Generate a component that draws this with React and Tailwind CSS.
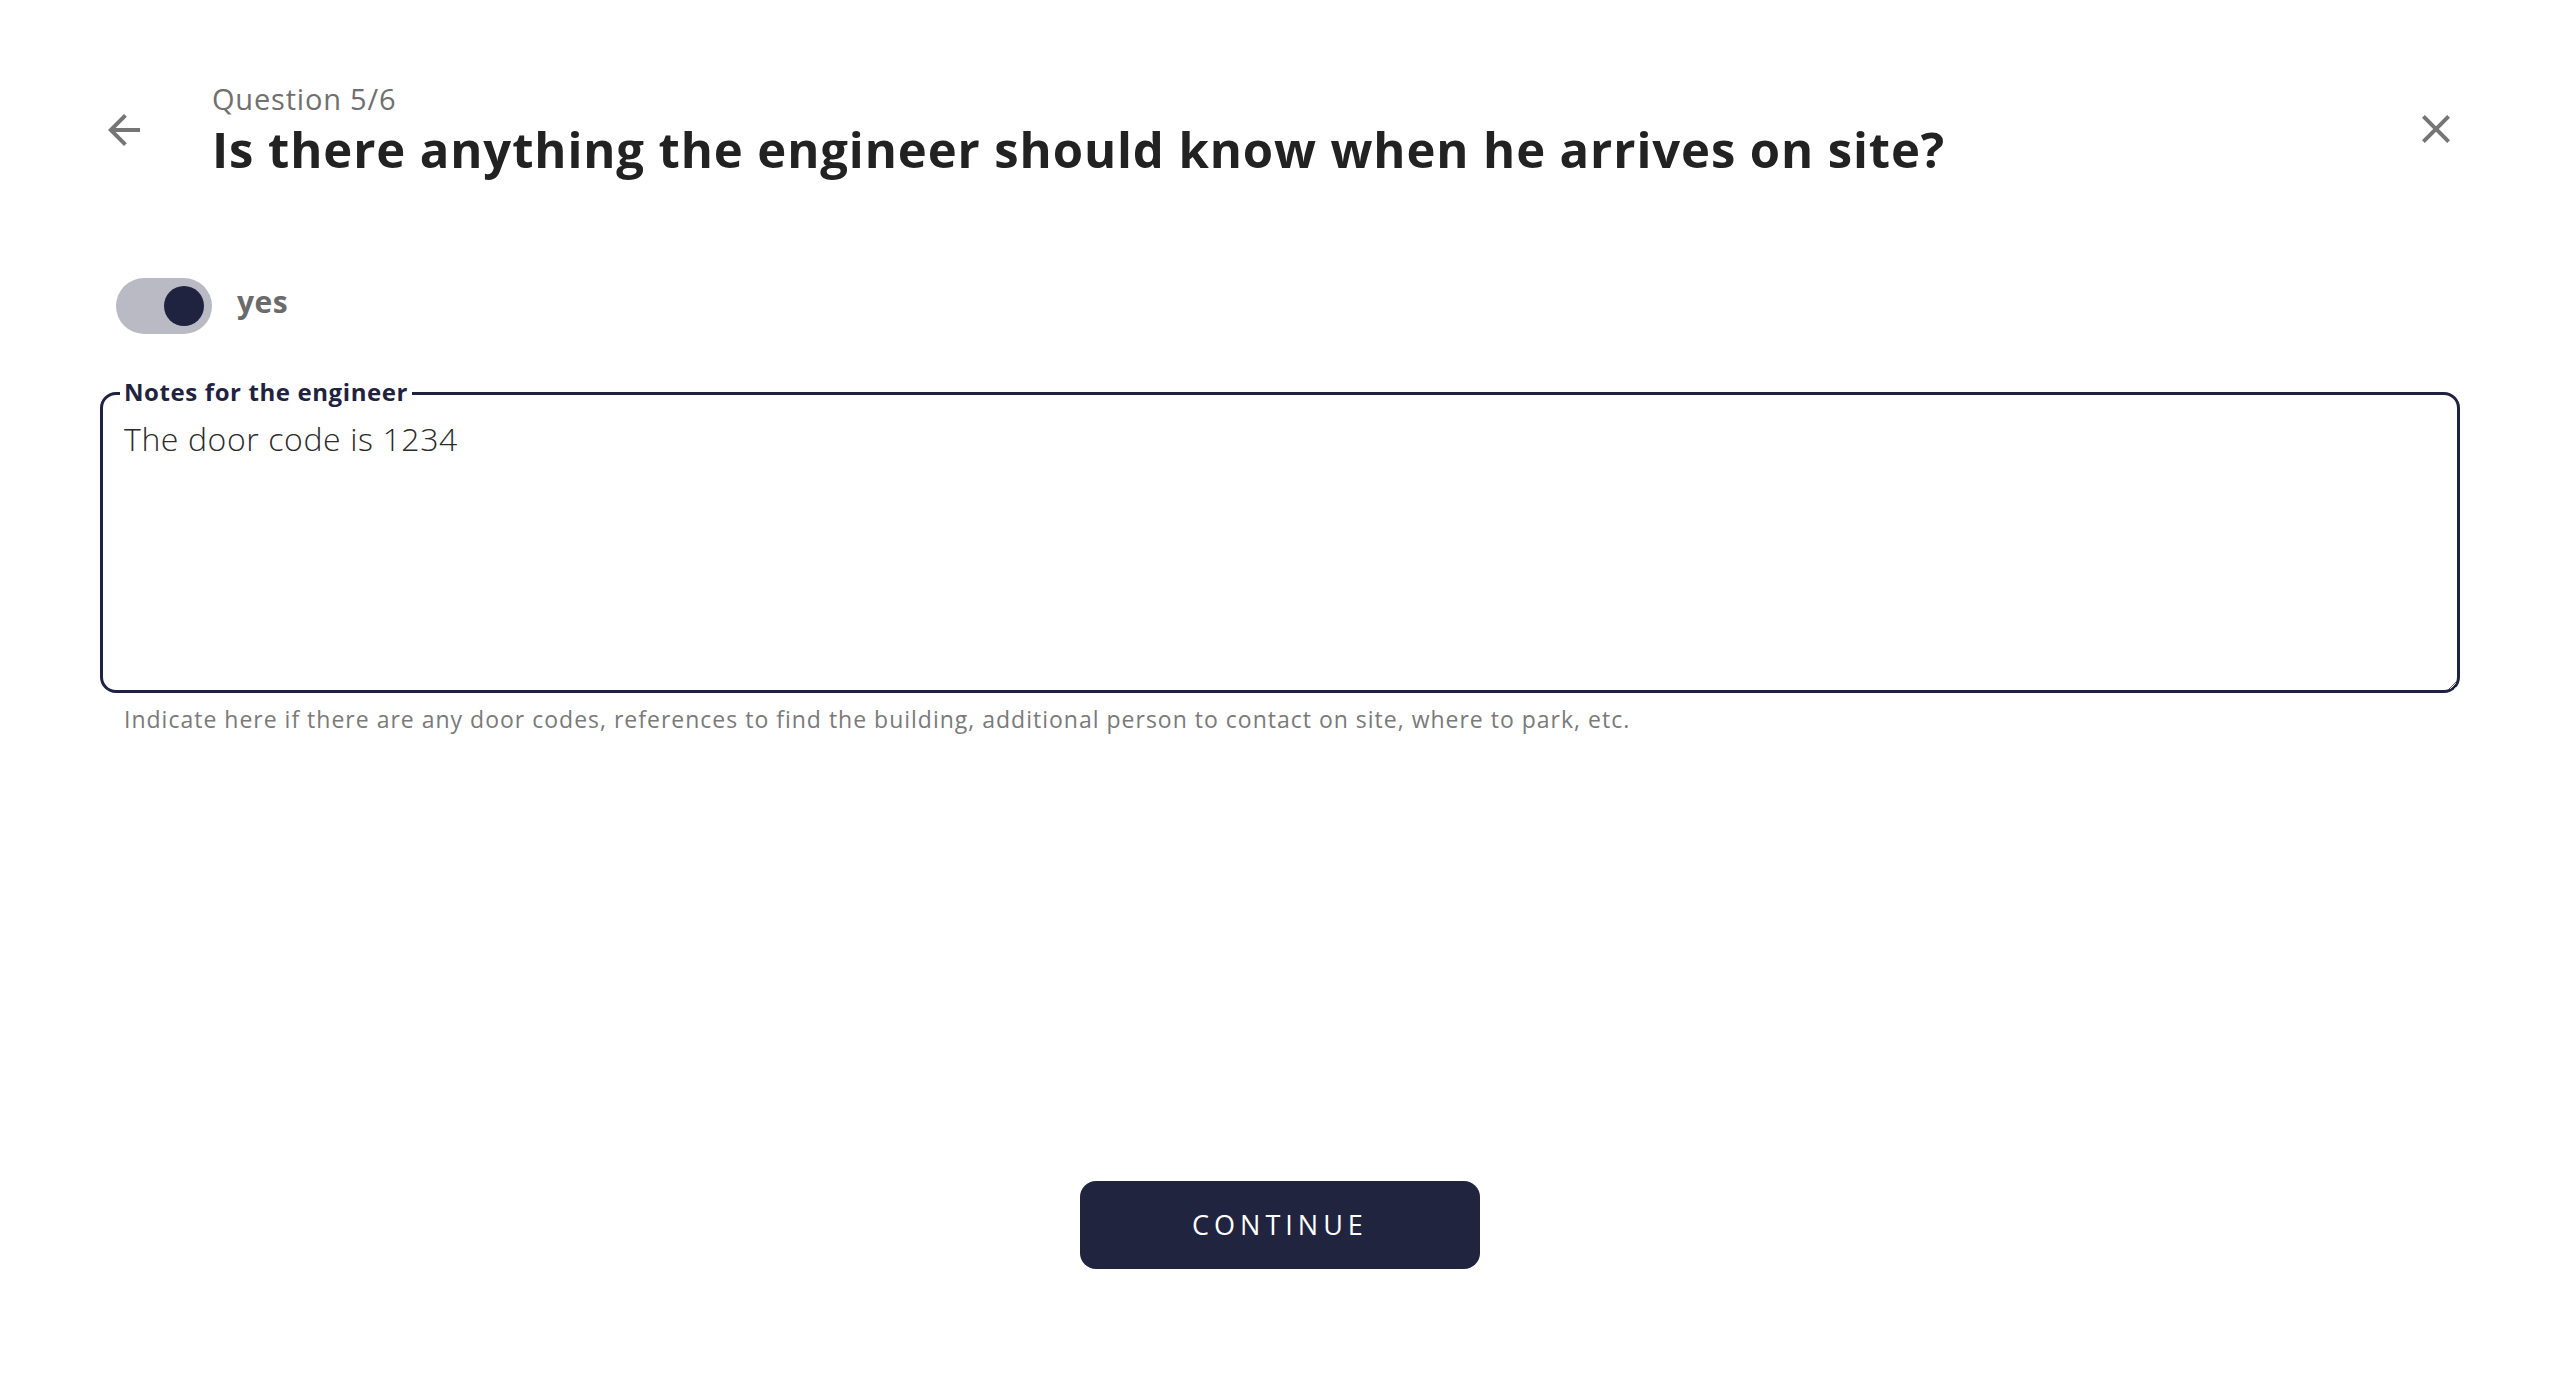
import React, { useState } from "react";

const ArrowBackIcon = ({ className }) => (
  <svg viewBox="0 0 24 24" className={className} fill="currentColor">
    <path d="M20 11H7.83l5.59-5.59L12 4l-8 8 8 8 1.41-1.41L7.83 13H20v-2z" />
  </svg>
);

const CloseIcon = ({ className }) => (
  <svg viewBox="0 0 24 24" className={className} fill="currentColor">
    <path d="M19 6.41 17.59 5 12 10.59 6.41 5 5 6.41 10.59 12 5 17.59 6.41 19 12 13.41 17.59 19 19 17.59 13.41 12z" />
  </svg>
);

const App = () => {
  const [hasNotes, setHasNotes] = useState(true);
  const [notes, setNotes] = useState("The door code is 1234");

  return (
    <div
      className="min-h-screen bg-white px-[100px] pt-[80px]"
      style={{ fontFamily: '"Open Sans", "Liberation Sans", sans-serif' }}
    >
      {/* Header */}
      <div className="flex items-start">
        <button className="mt-[26px] w-[48px] h-[48px] text-[#757575]">
          <ArrowBackIcon className="w-[48px] h-[48px]" />
        </button>
        <div className="ml-[64px] flex-1">
          <p className="text-[29px] leading-[38px] tracking-[0.8px] text-[#707070]">Question 5/6</p>
          <h1 className="text-[49px] leading-[62px] font-bold text-[#222222] tracking-[0.9px]">
            Is there anything the engineer should know when he arrives on site?
          </h1>
        </div>
        <button className="mt-[25px] w-[48px] h-[48px] text-[#757575]">
          <CloseIcon className="w-[48px] h-[48px]" />
        </button>
      </div>

      {/* Toggle */}
      <div className="mt-[98px] flex items-center pl-[16px]">
        <button
          onClick={() => setHasNotes(!hasNotes)}
          className="relative w-[96px] h-[56px] rounded-full bg-[#b9bac4] flex items-center"
        >
          <span
            className={`w-[40px] h-[40px] rounded-full bg-[#1f2340] ${hasNotes ? "ml-[48px]" : "ml-[8px]"}`}
          />
        </button>
        <span className="ml-[25px] -mt-[10px] text-[30px] font-bold tracking-[0.5px] text-[#6b6b6b]">yes</span>
      </div>

      {/* Notes */}
      <div className="relative mt-[58px]">
        <label className="absolute left-[20px] -top-[16px] bg-white px-[4px] text-[24px] leading-[32px] tracking-[0.6px] font-bold text-[#1f2340]">
          Notes for the engineer
        </label>
        <textarea
          value={notes}
          onChange={(e) => setNotes(e.target.value)}
          className="block w-full h-[301px] rounded-[16px] border-[3px] border-[#1f2340] px-[21px] pt-[24px] text-[32px] leading-[40px] tracking-[0.6px] font-light text-[#2b2b2b] outline-none resize-y"
        />
        <p className="mt-[11px] pl-[24px] text-[23px] leading-[30px] tracking-[1px] text-[#7a7a7a]">
          Indicate here if there are any door codes, references to find the building, additional person to contact on site, where to park, etc.
        </p>
      </div>

      {/* Continue */}
      <div className="mt-[447px] flex justify-center">
        <button className="w-[400px] h-[88px] rounded-[16px] bg-[#20243f] text-white text-[27px] tracking-[5px]">
          CONTINUE
        </button>
      </div>
    </div>
  );
};

export default App;
